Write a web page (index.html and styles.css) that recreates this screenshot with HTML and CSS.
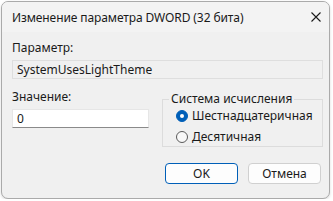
FILE: index.html
```html
<!DOCTYPE html>
<html lang="ru">
<head>
    <meta charset="UTF-8">
    <title>Изменение параметра DWORD (32 бита)</title>
    <link rel="stylesheet" href="styles.css">
</head>
<body>

    <div class="window">
        <div class="titlebar">
            <span class="title">Изменение параметра DWORD (32 бита)</span>
            <svg class="close" width="10" height="10" viewBox="0 0 10 10">
                <path d="M0.5 0.5 L9.5 9.5 M9.5 0.5 L0.5 9.5" stroke="#1a1a1a" stroke-width="1.1" fill="none"/>
            </svg>
        </div>

        <div class="content">
            <div class="label">Параметр:</div>
            <div class="field readonly">SystemUsesLightTheme</div>

            <div class="row">
                <div class="value-col">
                    <div class="label">Значение:</div>
                    <div class="field">0</div>
                </div>
                <fieldset class="group">
                    <legend>Система исчисления</legend>
                    <div class="radio checked"><span class="dot"></span>Шестнадцатеричная</div>
                    <div class="radio"><span class="dot"></span>Десятичная</div>
                </fieldset>
            </div>

            <div class="buttons">
                <button class="btn default">OK</button>
                <button class="btn">Отмена</button>
            </div>
        </div>
    </div>

</body>
</html>
```

FILE: styles.css
```css
* {
    margin: 0;
    padding: 0;
    box-sizing: border-box;
}

body {
    background: #ffffff;
    font-family: 'Noto Sans', 'Open Sans', sans-serif;
    font-size: 12px;
    color: #1a1a1a;
}

.window {
    margin: 1px 0 0 1px;
    width: 329px;
    height: 198px;
    background: #f0f0f0;
    border: 1px solid #aaaaaa;
    border-radius: 7px;
    box-shadow: 0 1px 3px rgba(0, 0, 0, 0.15);
    overflow: hidden;
}

.titlebar {
    height: 30px;
    background: #f3f3f3;
    display: flex;
    align-items: center;
    justify-content: space-between;
    padding: 0 8px 0 10px;
}

.title {
    font-size: 12px;
    letter-spacing: -0.1px;
}

.content {
    padding: 8px 6px 0 10px;
}

.label {
    height: 16px;
    line-height: 16px;
    margin-bottom: 4px;
}

.field {
    height: 19px;
    line-height: 17px;
    padding: 0 4px;
    background: #ffffff;
    border: 1px solid #e6e6e6;
    border-bottom-color: #8a8a8a;
}

.field.readonly {
    background: #f0f0f0;
    border-color: #dedede;
}

.row {
    display: flex;
    justify-content: space-between;
    margin-top: 10px;
}

.value-col {
    width: 137px;
}

.group {
    width: 161px;
    height: 54px;
    border: 1px solid #dcdcdc;
    padding: 0 0 0 6px;
    margin-top: 4px;
}

.group legend {
    padding: 0 2px;
    line-height: 12px;
}

.radio {
    display: flex;
    align-items: center;
    height: 21px;
    margin-left: 7px;
}

.dot {
    width: 12px;
    height: 12px;
    border-radius: 50%;
    border: 1px solid #5a5a5a;
    background: #f8f8f8;
    margin-right: 4px;
    position: relative;
}

.radio.checked .dot {
    background: #005fb8;
    border-color: #005fb8;
}

.radio.checked .dot::after {
    content: '';
    position: absolute;
    left: 3px;
    top: 3px;
    width: 4px;
    height: 4px;
    border-radius: 50%;
    background: #ffffff;
}

.buttons {
    display: flex;
    justify-content: flex-end;
    gap: 10px;
    margin-top: 16px;
    padding-right: 2px;
}

.btn {
    width: 73px;
    height: 21px;
    font-family: inherit;
    font-size: 12px;
    color: #1a1a1a;
    background: #fdfdfd;
    border: 1px solid #d0d0d0;
    border-radius: 4px;
}

.btn.default {
    border-color: #005fb8;
}
```
